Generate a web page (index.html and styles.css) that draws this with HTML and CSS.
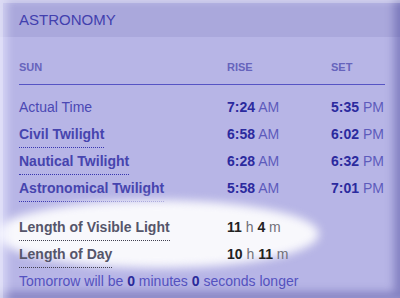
FILE: index.html
```html
<!DOCTYPE html>
<html>
<head>
  <title>Astronomy</title>
  <link rel="stylesheet" href="styles.css">
</head>
<body>
  <div class="panel">
    <div class="title">ASTRONOMY</div>

    <div class="sun-table">
      <div class="row head">
        <span>SUN</span>
        <span>RISE</span>
        <span>SET</span>
      </div>

      <div class="row first">
        <span class="plain">Actual Time</span>
        <span class="time"><b>7:24</b> AM</span>
        <span class="time"><b>5:35</b> PM</span>
      </div>
      <div class="row">
        <span><abbr class="term">Civil Twilight</abbr></span>
        <span class="time"><b>6:58</b> AM</span>
        <span class="time"><b>6:02</b> PM</span>
      </div>
      <div class="row">
        <span><abbr class="term">Nautical Twilight</abbr></span>
        <span class="time"><b>6:28</b> AM</span>
        <span class="time"><b>6:32</b> PM</span>
      </div>
      <div class="row">
        <span><abbr class="term">Astronomical Twilight</abbr></span>
        <span class="time"><b>5:58</b> AM</span>
        <span class="time"><b>7:01</b> PM</span>
      </div>

      <div class="length">
        <div class="glow"></div>
        <div class="row">
          <span><abbr class="term grey">Length of Visible Light</abbr></span>
          <span class="span2"><b>11</b> h <b>4</b> m</span>
        </div>
        <div class="row">
          <span><abbr class="term grey">Length of Day</abbr></span>
          <span class="span2"><b>10</b> h <b>11</b> m</span>
        </div>
      </div>

      <div class="tomorrow">Tomorrow will be <b>0</b> minutes <b>0</b> seconds longer</div>
    </div>

    <div class="bevel"></div>
  </div>
</body>
</html>
```

FILE: styles.css
```css
body {
  margin: 0;
  background: #b7b5e6;
  font-family: "Liberation Sans", Arial, sans-serif;
}

.panel {
  position: relative;
  width: 400px;
  height: 298px;
  overflow: hidden;
  background: #b7b5e6;
}

.title {
  box-sizing: border-box;
  height: 37px;
  padding: 11px 0 0 19px;
  line-height: 17px;
  font-size: 15px;
  color: #4240ae;
  background: #aaa8dc;
}

.sun-table {
  padding: 0 15px 0 19px;
}

.row {
  position: relative;
  display: grid;
  grid-template-columns: 208px 104px auto;
  height: 27px;
  line-height: 27px;
  font-size: 14px;
  white-space: nowrap;
}

.row.head {
  margin-top: 22px;
  height: auto;
  line-height: 16px;
  padding-bottom: 9px;
  border-bottom: 1px solid #5654c4;
  font-size: 11px;
  font-weight: bold;
  color: #6664bc;
}

.row.first {
  margin-top: 9px;
}

.plain {
  color: #4a48b4;
}

.term {
  display: inline-block;
  line-height: 16px;
  padding-bottom: 5px;
  border-bottom: 1px dotted #3836b0;
  font-weight: bold;
  text-decoration: none;
  color: #4644ae;
}

.term.grey {
  color: #55556a;
  border-bottom-color: #404050;
}

.time {
  color: #5d5bbc;
}

.time b {
  color: #2b2a9e;
}

.length {
  position: relative;
  margin-top: 12px;
}

.length .row {
  color: #707078;
}

.length .row b {
  color: #222;
}

.span2 {
  grid-column: 2 / 4;
}

/* white halo behind the day length rows */
.glow {
  position: absolute;
  left: -24px;
  top: -14px;
  width: 324px;
  height: 68px;
  border-radius: 50%;
  background: #f8f8fc;
  filter: blur(5px);
}

.tomorrow {
  position: relative;
  height: 27px;
  line-height: 27px;
  font-size: 14px;
  color: #5452c0;
}

.tomorrow b {
  color: #2a2a9a;
}

/* raised frame edges */
.bevel {
  position: absolute;
  inset: 0;
  pointer-events: none;
  box-shadow:
    inset 3px 3px 0 rgba(255, 255, 255, 0.25),
    inset 9px 2px 8px -2px rgba(235, 235, 255, 0.6),
    inset -9px -9px 9px -3px rgba(70, 68, 150, 0.45);
}
```
